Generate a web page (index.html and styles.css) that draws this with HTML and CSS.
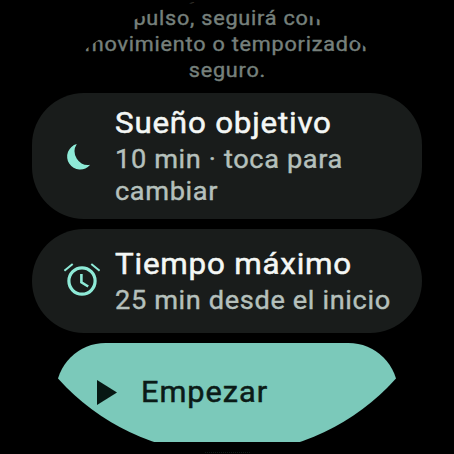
FILE: index.html
```
<!DOCTYPE html>
<html lang="es">
<head>
<meta charset="utf-8">
<title>Siesta</title>
<link rel="stylesheet" href="styles.css">
</head>
<body>
<main class="watch">
  <p class="note">No llega señal de tu<br>pulso, seguirá con<br>movimiento o temporizador<br>seguro.</p>
  <section class="card card-goal">
    <svg class="icon" viewBox="0 0 36 36"><path d="M12.8 6A13 13 0 1 0 26.2 26.8A13.6 13.6 0 0 1 12.8 6Z" fill="#8eead7"/></svg>
    <div class="copy">
      <h2 class="title">Sueño objetivo</h2>
      <p class="detail">10 min · toca para<br>cambiar</p>
    </div>
  </section>
  <section class="card card-max">
    <svg class="icon" viewBox="0 0 36 36" fill="none" stroke="#8eead7"><circle cx="18" cy="18" r="13.1" stroke-width="3.2"/><path d="M17.4 11V19.3L24.2 23.5" stroke-width="2.6"/><path d="M0.4 7.8L8.7 0.9M27.3 0.9L35.6 7.8" stroke-width="2"/></svg>
    <div class="copy">
      <h2 class="title">Tiempo máximo</h2>
      <p class="detail">25 min desde el inicio</p>
    </div>
  </section>
  <button class="start">
    <svg class="play" viewBox="0 0 20 25"><path d="M0 0L20 12.5L0 25Z" fill="#071713"/></svg>
    <span class="start-label">Empezar</span>
  </button>
  <div class="peek"></div>
</main>
</body>
</html>
```
FILE: styles.css
```
* { box-sizing: border-box; }
html, body { margin: 0; background: #000; }
body { width: 454px; height: 454px; overflow: hidden; font-family: Roboto, "Liberation Sans", sans-serif; }
.watch {
  width: 454px;
  height: 454px;
  overflow: hidden;
  clip-path: circle(227px at 50% 50%);
  display: flex;
  flex-direction: column;
  align-items: center;
}
.note {
  flex: none;
  margin: -21px 0 10px;
  height: 104px;
  font-size: 21px;
  line-height: 26px;
  font-weight: 400;
  -webkit-text-stroke: 0.4px currentColor;
  letter-spacing: 0.75px;
  transform: scaleX(1.03);
  text-align: center;
  white-space: nowrap;
  color: #76807c;
}
.card {
  flex: none;
  width: 390px;
  border-radius: 52px;
  background: #191c1b;
  display: flex;
  align-items: center;
  padding-left: 32px;
  margin-bottom: 10px;
}
.card-goal { height: 126px; }
.card-max { height: 104px; }
.icon { width: 36px; height: 36px; margin-right: 15px; flex: none; overflow: visible; }
.copy { white-space: nowrap; transform: scaleX(1.045); transform-origin: left; }
.title {
  margin: 0;
  font-size: 30px;
  line-height: 36px;
  font-weight: 400;
  -webkit-text-stroke: 0.5px currentColor;
  letter-spacing: 0.75px;
  color: #f4f7f5;
}
.detail {
  margin: 2px 0 0;
  font-size: 26px;
  line-height: 32px;
  font-weight: 400;
  -webkit-text-stroke: 0.4px currentColor;
  letter-spacing: 0.6px;
  color: #b5c0bc;
}
.start {
  flex: none;
  width: 342px;
  height: 99px;
  border: 0;
  border-radius: 49.5px;
  background: #7bc9ba;
  color: #0b1b17;
  display: flex;
  align-items: center;
  padding: 0 0 1px 41px;
  font: 400 29px/36px Roboto, "Liberation Sans", sans-serif;
  -webkit-text-stroke: 0.5px currentColor;
  letter-spacing: 0.9px;
}
.start-label { transform: scaleX(1.06); transform-origin: left; }
.play { width: 20px; height: 25px; margin-right: 24px; }
.peek {
  flex: none;
  width: 45px;
  margin-top: 10px;
  border-top: 1px dotted #101916;
}
```
